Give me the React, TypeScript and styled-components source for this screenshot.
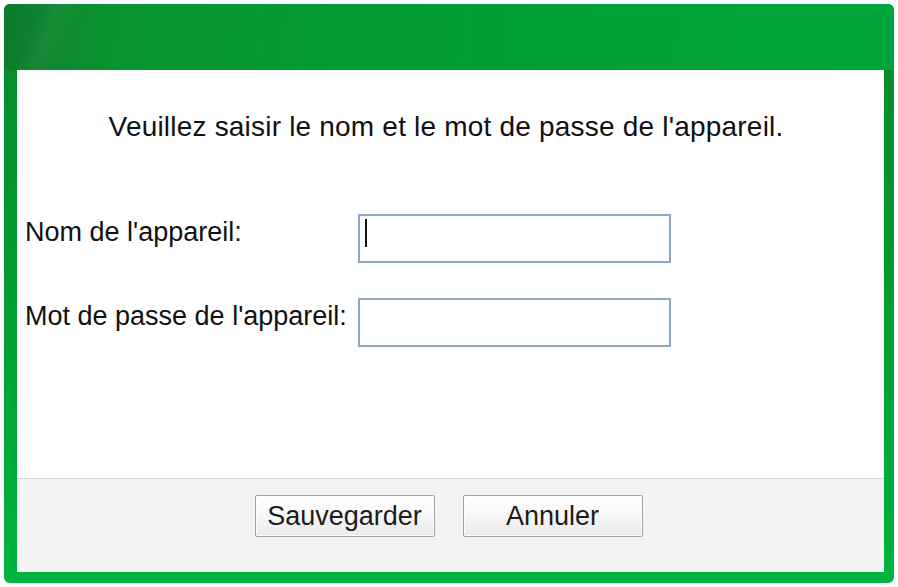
import React from "react";
import styled, { createGlobalStyle } from "styled-components";

const GlobalStyle = createGlobalStyle`
  html, body {
    margin: 0;
    padding: 0;
    background: #ffffff;
  }
  body {
    font-family: "Liberation Sans", Arial, sans-serif;
    color: #111111;
  }
  * { box-sizing: border-box; }
`;

const Frame = styled.div`
  margin: 4px;
  width: 890px;
  height: 579px;
  border-radius: 6px;
  padding: 0 10px 11px 13px;
  display: flex;
  flex-direction: column;
  background: linear-gradient(180deg, #07882d 0%, #03992f 40%, #00ab3b 80%, #00b33f 100%);
  overflow: hidden;
`;

const TitleBar = styled.div`
  height: 66px;
  flex: none;
  margin: 0 -10px 0 -13px;
  background:
    linear-gradient(112deg, rgba(255,255,255,0) 0%, rgba(255,255,255,0) 4%, rgba(255,255,255,0.04) 6%, rgba(255,255,255,0) 9%, rgba(255,255,255,0) 100%),
    linear-gradient(95deg, #0b7a2c 0%, #0d872f 6%, #0a9232 12%, #039a35 35%, #00a038 65%, #00a63b 100%);
`;

const Panel = styled.div`
  flex: 1;
  display: flex;
  flex-direction: column;
  background: #ffffff;
`;

const Heading = styled.p`
  margin: 41px 0 0;
  padding-right: 9px;
  text-align: center;
  font-size: 28px;
  line-height: 32px;
  letter-spacing: 0.2px;
  color: #111111;
`;

const Form = styled.div`
  margin-top: 71px;
  padding-left: 8px;
  display: grid;
  grid-template-columns: 333px 313px;
  row-gap: 35px;
  align-items: start;
`;

const Label = styled.label`
  font-size: 27px;
  line-height: 32px;
  padding-top: 2px;
  color: #111111;
  white-space: nowrap;
`;

const FieldWrap = styled.div`
  position: relative;
  width: 313px;
  height: 49px;
`;

const TextInput = styled.input`
  width: 100%;
  height: 100%;
  border: 2px solid #8fa7c5;
  background: #ffffff;
  padding: 0 6px;
  font-family: "Liberation Sans", Arial, sans-serif;
  font-size: 24px;
  outline: none;
  caret-color: transparent;
`;

const Caret = styled.span`
  position: absolute;
  left: 7px;
  top: 5px;
  width: 2px;
  height: 28px;
  background: #111111;
`;

const Spacer = styled.div`
  flex: 1;
`;

const Footer = styled.div`
  height: 94px;
  flex: none;
  border-top: 1px solid #d6d6d6;
  background: #f4f4f4;
  padding: 16px 4px 0 0;
  display: flex;
  justify-content: center;
  align-items: flex-start;
  gap: 28px;
`;

const Button = styled.button`
  width: 180px;
  height: 42px;
  border: 1px solid #a3a3a3;
  border-radius: 2px;
  background: linear-gradient(180deg, #ffffff 0%, #f7f7f7 50%, #e9e9e9 100%);
  box-shadow: inset 0 0 0 1px rgba(255,255,255,0.9);
  font-family: "Liberation Sans", Arial, sans-serif;
  font-size: 27px;
  color: #1c1c1c;
  display: flex;
  align-items: center;
  justify-content: center;
  padding: 0;
  cursor: pointer;
`;

export default function App() {
  return (
    <>
      <GlobalStyle />
      <Frame>
        <TitleBar />
        <Panel>
          <Heading>Veuillez saisir le nom et le mot de passe de l'appareil.</Heading>
          <Form>
            <Label htmlFor="device-name">Nom de l'appareil:</Label>
            <FieldWrap>
              <TextInput id="device-name" type="text" />
              <Caret />
            </FieldWrap>
            <Label htmlFor="device-pass">Mot de passe de l'appareil:</Label>
            <FieldWrap>
              <TextInput id="device-pass" type="password" />
            </FieldWrap>
          </Form>
          <Spacer />
          <Footer>
            <Button>Sauvegarder</Button>
            <Button>Annuler</Button>
          </Footer>
        </Panel>
      </Frame>
    </>
  );
}
